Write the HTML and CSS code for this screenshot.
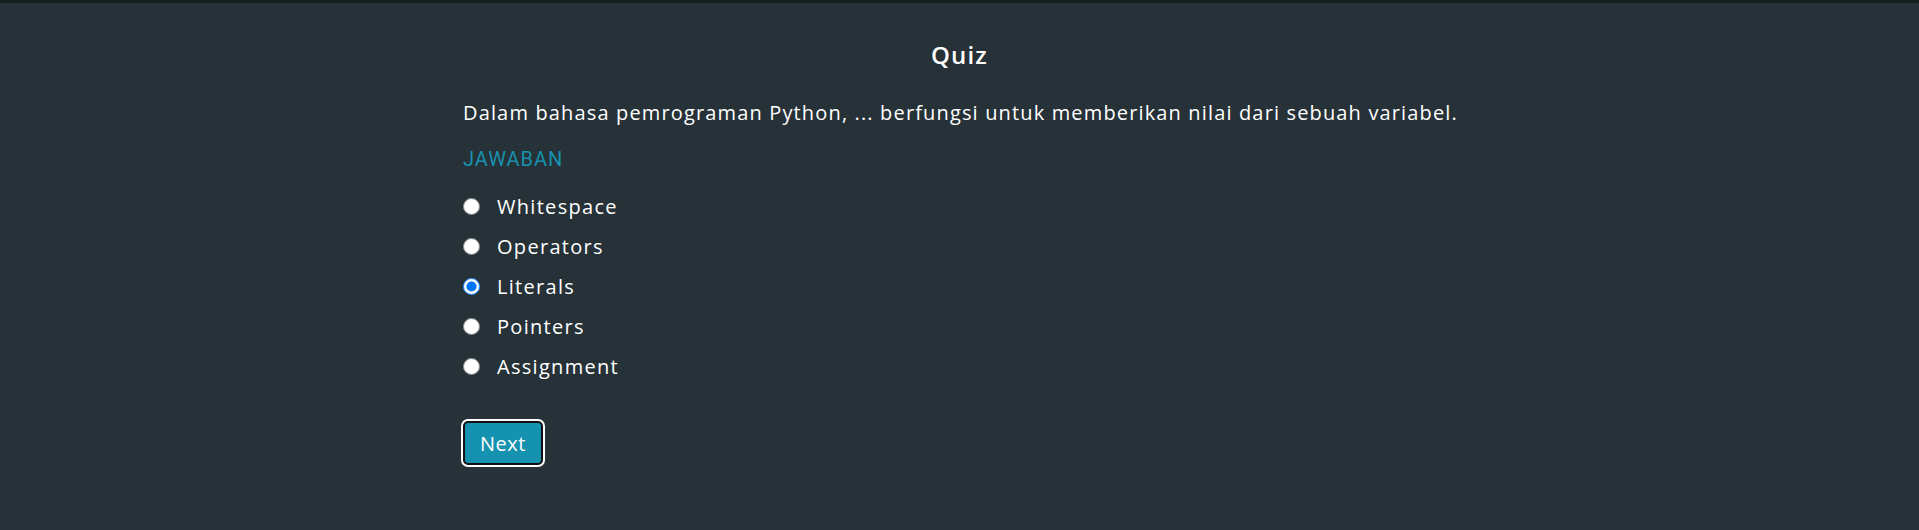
FILE: index.html
```html
<!DOCTYPE html>
<html lang="id">
<head>
<meta charset="utf-8">
<title>Quiz</title>
<link rel="stylesheet" href="styles.css">
</head>
<body>
<main class="quiz">
  <h1 class="quiz-title">Quiz</h1>
  <p class="question">Dalam bahasa pemrograman Python, ... berfungsi untuk memberikan nilai dari sebuah variabel.</p>
  <div class="answer-label">JAWABAN</div>
  <form class="options">
    <label class="option"><input type="radio" name="ans" value="a"><span>Whitespace</span></label>
    <label class="option"><input type="radio" name="ans" value="b"><span>Operators</span></label>
    <label class="option"><input type="radio" name="ans" value="c" checked><span>Literals</span></label>
    <label class="option"><input type="radio" name="ans" value="d"><span>Pointers</span></label>
    <label class="option"><input type="radio" name="ans" value="e"><span>Assignment</span></label>
    <div class="actions"><button type="button" class="btn-next">Next</button></div>
  </form>
</main>
</body>
</html>
```

FILE: styles.css
```css
html, body {
  margin: 0;
  padding: 0;
}

body {
  background: #263238;
  border-top: 3px solid #141e1e;
  color: #ffffff;
  font-family: "Open Sans", "Noto Sans", sans-serif;
  min-height: 527px;
}

.quiz {
  width: 993px;
  margin: 0 auto;
  display: flex;
  flex-direction: column;
}

.quiz-title {
  margin: 37px 0 0;
  text-align: center;
  font-size: 24px;
  line-height: 30px;
  font-weight: 600;
  letter-spacing: 1.2px;
}

.question {
  margin: 29px 0 0;
  font-size: 20px;
  line-height: 27px;
  letter-spacing: 1.15px;
  white-space: nowrap;
}

.answer-label {
  margin-top: 21px;
  font-family: Roboto, "Liberation Sans", sans-serif;
  font-size: 20px;
  line-height: 24px;
  letter-spacing: 1px;
  color: #1791ad;
}

.options {
  margin: 15px 0 0;
  display: flex;
  flex-direction: column;
}

.option {
  display: flex;
  align-items: center;
  height: 40px;
  font-size: 20px;
  letter-spacing: 1.3px;
  cursor: pointer;
}

.option input {
  width: 17px;
  height: 17px;
  margin: 0 17px 0 0;
}

.actions {
  margin-top: 35px;
}

.btn-next {
  height: 44px;
  padding: 0 15px;
  background: #1592b0;
  color: #ffffff;
  border: 2px solid #111;
  border-radius: 5px;
  box-shadow: 0 0 0 2px #ffffff;
  font-family: "Open Sans", "Noto Sans", sans-serif;
  font-size: 20px;
  letter-spacing: 0.5px;
  cursor: pointer;
}
```
